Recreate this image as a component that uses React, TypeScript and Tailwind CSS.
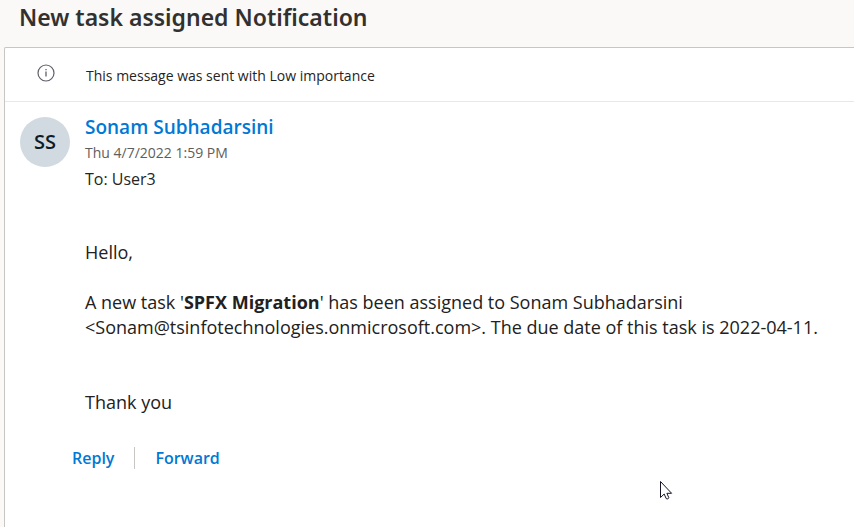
// MessageView: reading pane for a single mail message.

interface Message {
  subject: string
  notice: string
  sender: string
  initials: string
  sentAt: string
  to: string
}

const MESSAGE: Message = {
  subject: "New task assigned Notification",
  notice: "This message was sent with Low importance",
  sender: "Sonam Subhadarsini",
  initials: "SS",
  sentAt: "Thu 4/7/2022 1:59 PM",
  to: "User3",
}

function InfoIcon() {
  return (
    <svg width="18" height="18" viewBox="0 0 18 18" fill="none" stroke="#605e6a" aria-hidden="true">
      <circle cx="9" cy="9" r="8" strokeWidth="1.2" />
      <path d="M9 7.5v5M9 5v1.2" strokeWidth="1.3" />
    </svg>
  )
}

// Mouse pointer resting over the pane
function Pointer() {
  return (
    <svg
      className="absolute left-[660px] top-[481px]"
      width="14"
      height="20"
      viewBox="0 0 14 20"
      fill="#fff"
      stroke="#15152a"
      aria-hidden="true"
    >
      <path d="M.5 .5v16l3.7-3.5 2 4.6q1.6 1.4 2.6-.9l-1.9-4.4h4.7z" />
    </svg>
  )
}

export default function App() {
  return (
    <div className="relative flex min-h-screen flex-col overflow-hidden bg-[#faf9f8] font-['Open_Sans','Noto_Sans',sans-serif] text-[#252423]">
      <h1 className="px-[19px] pt-1 pb-4 font-['Noto_Sans','Open_Sans',sans-serif] text-[23px] leading-[27px] font-semibold text-[#323130]">
        {MESSAGE.subject}
      </h1>

      <main className="ml-1 flex-1 rounded-tl-xs border-t border-l border-[#c8c6c4] bg-white">
        {/* Importance notice */}
        <div className="flex h-[54px] items-start border-b border-[#e8e8e8] pt-4 pl-8">
          <InfoIcon />
          <p className="pt-0.5 pl-[31px] text-sm">{MESSAGE.notice}</p>
        </div>

        {/* Sender */}
        <header className="flex gap-[15px] px-[15px] pt-3">
          <div className="mt-[3px] flex size-[50px] shrink-0 items-center justify-center rounded-full bg-[#d0dae0] text-xl font-semibold text-[#0f1c28]">
            {MESSAGE.initials}
          </div>
          <div>
            <a href="#sender" className="block text-[19px] leading-[26px] font-semibold text-[#0078d4]">
              {MESSAGE.sender}
            </a>
            <p className="text-sm leading-[26px] text-[#605e5c]">{MESSAGE.sentAt}</p>
            <p className="text-base leading-[26px]">To: {MESSAGE.to}</p>
          </div>
        </header>

        {/* Message body */}
        <div className="pt-12 pl-20 text-lg leading-[25px] text-[#212121]">
          <p>Hello,</p>
          <p className="pt-[25px]">
            A new task '<b>SPFX Migration</b>' has been assigned to Sonam Subhadarsini
            <br />
            &lt;Sonam@tsinfotechnologies.onmicrosoft.com&gt;. The due date of this task is 2022-04-11.
          </p>
          <p className="pt-[50px]">Thank you</p>
        </div>

        <div className="flex items-center pt-8 pl-[67px] text-base leading-[22px] font-semibold text-[#0078d4]">
          <button type="button" className="border-r border-[#c8c6c4] pr-5">Reply</button>
          <button type="button" className="pl-5">Forward</button>
        </div>
      </main>

      <Pointer />
    </div>
  )
}
